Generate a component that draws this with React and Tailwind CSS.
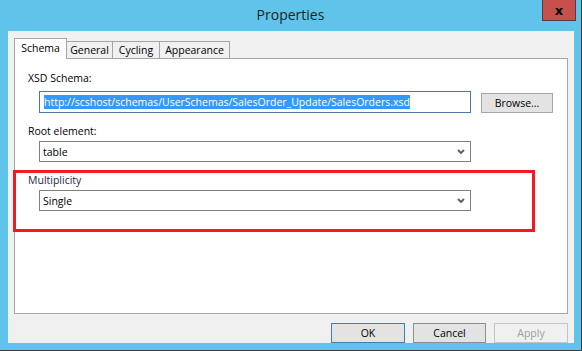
import React from "react";

const font = { fontFamily: '"Open Sans", "Noto Sans", sans-serif' };

function Chevron() {
  return (
    <svg width="8" height="6" viewBox="0 0 8 6" className="block">
      <path d="M1 1 L4 4 L7 1" fill="none" stroke="#5a5a5a" strokeWidth="1.8" />
    </svg>
  );
}

function Select({ value }) {
  return (
    <div className="ml-[24px] flex h-[21px] w-[432px] items-center justify-between border border-[#7f7f7f] bg-white pl-[3px] pr-[5px]">
      <span className="text-[10.5px] leading-[14px] text-black">{value}</span>
      <Chevron />
    </div>
  );
}

export default function App() {
  return (
    <div
      className="flex h-[351px] w-[582px] flex-col border-b border-r border-[#3b3b3b] bg-[#60c4ea]"
      style={font}
    >
      {/* Title bar */}
      <div className="grid h-[31px] shrink-0 grid-cols-[1fr_auto_1fr]">
        <div />
        <div className="pt-[5px] text-[14px] leading-[20px] text-[#1e1e1e]">Properties</div>
        <div className="flex justify-end pr-[5px]">
          <div className="flex h-[21px] w-[34px] items-center justify-center border border-t-0 border-[#5b3a3a] bg-[#c7504c]">
            <span className="text-[13px] font-bold leading-none text-black" style={{ fontFamily: '"DejaVu Sans", sans-serif' }}>x</span>
          </div>
        </div>
      </div>

      {/* Client area */}
      <div className="ml-[8px] mr-[7px] flex h-[312px] flex-col bg-[#f0f0f0] px-[6px] pt-[7px]">
        {/* Tabs */}
        <div className="flex h-[20px] items-end text-[10.5px] text-black">
          <div className="relative z-10 -mb-px flex h-[21px] w-[53px] items-start justify-center border border-b-0 border-[#a5a5a5] bg-white pt-[2px] leading-[14px]">
            Schema
          </div>
          <div className="flex h-[17px] w-[46px] items-center justify-center border-t border-r border-[#a5a5a5] leading-[14px]">
            General
          </div>
          <div className="flex h-[17px] w-[47px] items-center justify-center border-t border-r border-[#a5a5a5] leading-[14px]">
            Cycling
          </div>
          <div className="flex h-[17px] w-[70px] items-center justify-center border-t border-r border-[#a5a5a5] leading-[14px]">
            Appearance
          </div>
        </div>

        {/* Panel */}
        <div className="flex h-[256px] flex-col border border-[#a5a5a5] bg-white pt-[12px] text-[10.5px] text-black">
          <div className="pl-[13px] leading-[14px]">XSD Schema:</div>
          <div className="mt-[6px] flex items-start">
            <div className="ml-[24px] flex h-[22px] w-[432px] items-center border border-[#4c79a6] bg-white pl-[4px]">
              <span className="bg-[#3399ff] leading-[14px] text-white">
                http://scshost/schemas/UserSchemas/SalesOrder_Update/SalesOrders.xsd
              </span>
            </div>
            <div className="ml-[10px] mt-[2px] flex h-[20px] w-[72px] items-center justify-center border border-[#a5a5a5] bg-[#e3e3e3] leading-[14px]">
              Browse...
            </div>
          </div>
          <div className="mt-[11px] pl-[13px] leading-[14px]">Root element:</div>
          <div className="mt-[3px]">
            <Select value="table" />
          </div>

          {/* Highlight annotation */}
          <div className="-ml-[2px] mt-[8px] h-[62px] w-[522px] border-[3px] border-[#ed1c24]">
            <div className="pl-[12px] leading-[14px] text-[#1f1f4f]">Multiplicity</div>
            <div className="mt-[3px] -ml-[1px]">
              <Select value="Single" />
            </div>
          </div>
        </div>

        {/* Buttons */}
        <div className="mt-[9px] flex justify-end gap-[8px] text-[10.5px]">
          <div className="flex h-[20px] w-[74px] items-center justify-center border border-[#3c7fb1] bg-[#e3e3e3] leading-[14px] text-black">
            OK
          </div>
          <div className="flex h-[20px] w-[73px] items-center justify-center border border-[#8f8f8f] bg-[#e3e3e3] leading-[14px] text-black">
            Cancel
          </div>
          <div className="flex h-[20px] w-[74px] items-center justify-center border border-[#c4c4c4] bg-[#f0f0f0] leading-[14px] text-[#9d9d9d]">
            Apply
          </div>
        </div>
      </div>
    </div>
  );
}
